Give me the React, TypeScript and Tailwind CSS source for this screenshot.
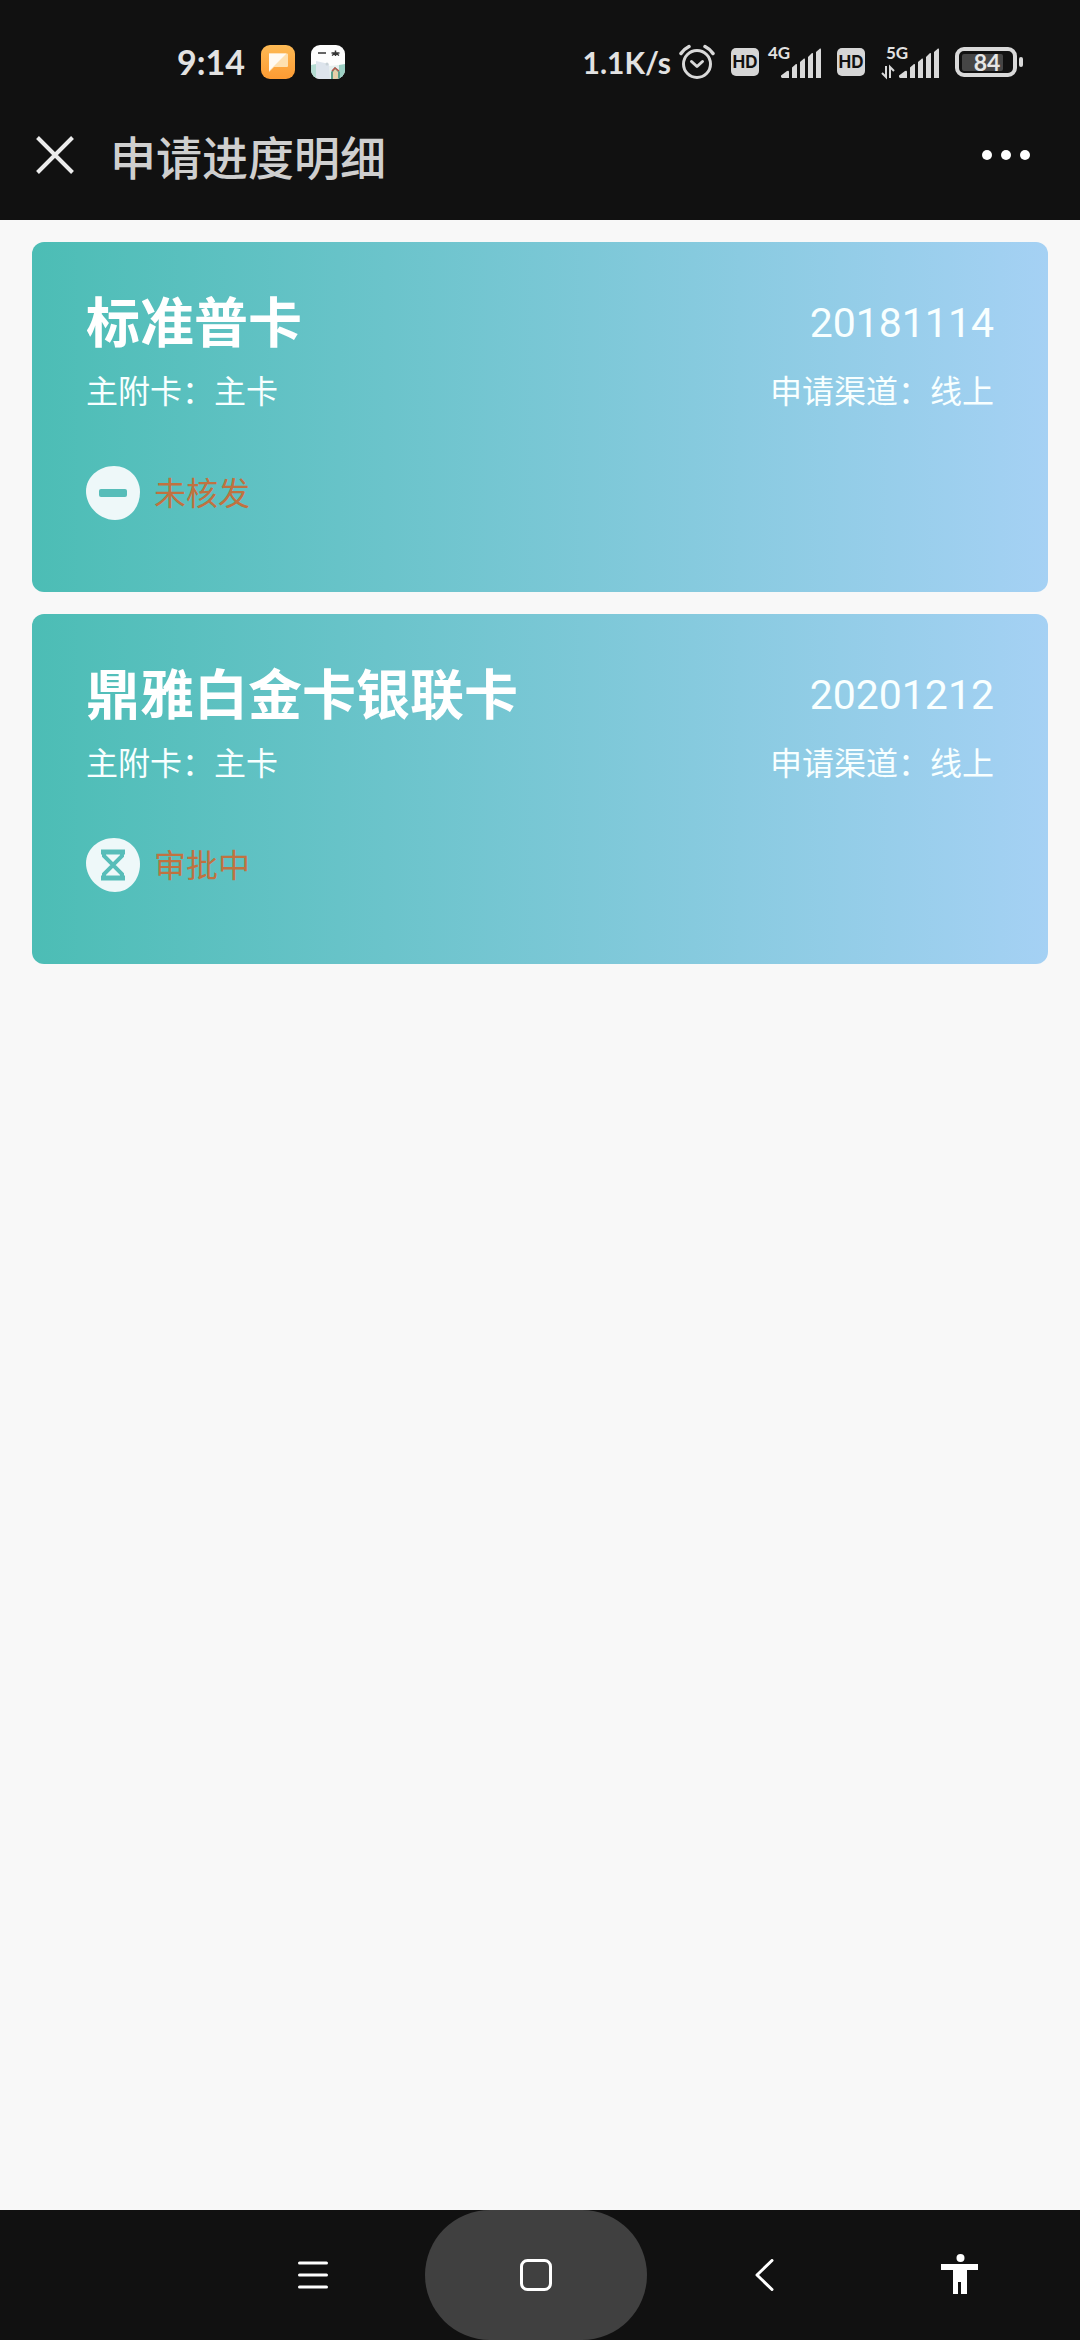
import type { ReactNode } from 'react';

type Status = 'rejected' | 'pending';

interface Application {
    name: string;
    date: string;
    holder: string;
    channel: string;
    status: Status;
    statusText: string;
}

const applications: Application[] = [
    {
        name: '标准普卡',
        date: '20181114',
        holder: '主卡',
        channel: '线上',
        status: 'rejected',
        statusText: '未核发',
    },
    {
        name: '鼎雅白金卡银联卡',
        date: '20201212',
        holder: '主卡',
        channel: '线上',
        status: 'pending',
        statusText: '审批中',
    },
];

function HdBadge() {
    return (
        <span className="flex h-7 w-7 items-center justify-center rounded-[5px] bg-[#d6d6d6] font-['Inter',sans-serif] text-[17px] leading-none font-bold text-[#111111]">
            HD
        </span>
    );
}

function SignalBars() {
    return (
        <g fill="#d9d9d9">
            <path d="M0 29.5 6 25q2-1 2 1v6H1q-1.500-1-1-2.500z" />
            <path d="M11 21.500 15 18q1-.5 1 1v13h-5z" />
            <path d="M19 16 23 12.500q1-.5 1 1V32h-5z" />
            <path d="M27 11 31 7q1-.5 1 1v24h-5z" />
            <path d="M35 6 39 2.500q1-.5 1 1V32h-5z" />
        </g>
    );
}

function Signal4G() {
    return (
        <svg className="h-12 w-[54px]" viewBox="0 -8 54 48">
            <text x="1" y="13" fill="#e2e2e2" fontSize="17" fontWeight="700" fontFamily="Lato, sans-serif">4G</text>
            <g transform="translate(14 0)">
                <SignalBars />
            </g>
        </svg>
    );
}

function Signal5G() {
    return (
        <svg className="h-12 w-[58px]" viewBox="0 -8 58 48">
            <text x="5" y="13" fill="#e2e2e2" fontSize="17" fontWeight="700" fontFamily="Lato, sans-serif">5G</text>
            <path d="M5 20v11L1 27M9 32V21l4 4" fill="none" stroke="#d9d9d9" strokeWidth="2" />
            <g transform="translate(18 0)">
                <SignalBars />
            </g>
        </svg>
    );
}

function AlarmIcon() {
    return (
        <svg className="h-9 w-9" viewBox="0 0 36 36" fill="none" stroke="#d9d9d9" strokeLinecap="round">
            <circle cx="18" cy="20" r="13.500" strokeWidth="3" />
            <path d="M12.500 17.500 18 22.500l5.500-5" strokeWidth="3" strokeLinejoin="round" />
            <path d="M2 9.500Q5 5 10 2.500M34 9.500Q31 5 26 2.500" strokeWidth="3.500" />
        </svg>
    );
}

function BatteryIcon() {
    return (
        <svg className="h-[30px] w-[68px]" viewBox="0 0 68 30">
            <rect x="2" y="2" width="58" height="26" rx="7" fill="none" stroke="#d9d9d9" strokeWidth="4" />
            <rect x="7" y="7" width="41" height="17" rx="2" fill="#454545" />
            <rect x="64" y="10" width="4" height="10" rx="2" fill="#d9d9d9" />
            <text x="32" y="24" textAnchor="middle" fill="#e6e6e6" fontSize="23" fontWeight="700" fontFamily="Lato, sans-serif">84</text>
        </svg>
    );
}

function MessageAppIcon() {
    return (
        <svg className="h-[34px] w-[34px]" viewBox="0 0 34 34">
            <defs>
                <linearGradient id="message-bg" x1="0" y1="0" x2="0" y2="1">
                    <stop offset="0" stopColor="#fdba55" />
                    <stop offset="1" stopColor="#fd9b33" />
                </linearGradient>
            </defs>
            <rect width="34" height="34" rx="9" fill="url(#message-bg)" />
            <path d="M8 8.500h18q1 0 1 1V21q0 1-1 1H13l-5 5z" fill="#fee0b0" />
            <path d="M8 8.500h17.500L8 26z" fill="#fffaf2" />
        </svg>
    );
}

function CalendarAppIcon() {
    return (
        <svg className="h-[34px] w-[34px]" viewBox="0 0 34 34">
            <defs>
                <clipPath id="calendar-clip">
                    <rect width="34" height="34" rx="9" />
                </clipPath>
            </defs>
            <g clipPath="url(#calendar-clip)">
                <rect width="34" height="34" fill="#fdfdfd" />
                <path d="M5 34V16l13 3 2 15z" fill="#dde4ec" />
                <path d="M0 20l5-1v15H0z" fill="#b5dcd2" />
                <path d="M28 20l6-1v15h-6z" fill="#9cd0c3" />
                <path d="M18 21l10-1v14h-9z" fill="#e6efee" />
                <circle cx="16" cy="19" r="1.500" fill="#c8d2d6" />
                <path d="M20 34v-7l4-5 5 5v7z" fill="#5fa08a" />
                <path d="M22 34v-7l2-3 3 3v7z" fill="#e8cfa8" />
                <path d="M21 26l3-3 4 3" fill="none" stroke="#b5574c" strokeWidth="1.500" />
                <path d="M7 8h8M20.500 8h8M24.500 5.500V11M24.500 8l-3.500 2.500M24.500 8l3.500 2.500" fill="none" stroke="#333333" strokeWidth="1.500" />
            </g>
        </svg>
    );
}

function StatusBar() {
    return (
        <div className="flex h-[90px] items-end justify-between pr-[57px] pb-2 pl-[177px] font-['Lato',sans-serif] font-bold text-[#e2e2e2]">
            <div className="flex h-10 items-center gap-4">
                <span className="text-[34px] leading-10">9:14</span>
                <MessageAppIcon />
                <CalendarAppIcon />
            </div>
            <div className="flex h-10 items-center gap-4">
                <div className="flex items-center gap-2">
                    <span className="text-[30px] leading-10">1.1K/s</span>
                    <AlarmIcon />
                </div>
                <div className="flex items-center gap-2">
                    <HdBadge />
                    <Signal4G />
                </div>
                <HdBadge />
                <Signal5G />
                <BatteryIcon />
            </div>
        </div>
    );
}

function TitleBar() {
    return (
        <div className="flex h-[130px] items-start justify-between pr-[50px] pl-9">
            <div className="flex h-[130px] items-center">
                <button type="button" aria-label="关闭">
                    <svg className="h-[38px] w-[38px]" viewBox="0 0 38 38" fill="none" stroke="#ececec" strokeWidth="4">
                        <path d="M1.500 1.500l35 35M36.500 1.500l-35 35" />
                    </svg>
                </button>
                <h1 className="ml-9 pt-2 text-[46px] leading-[60px] font-medium text-[#cfcfcf]">申请进度明细</h1>
            </div>
            <button type="button" aria-label="更多" className="flex h-[130px] items-center gap-[9px]">
                <span className="h-2.5 w-2.5 rounded-full bg-white"></span>
                <span className="h-2.5 w-2.5 rounded-full bg-white"></span>
                <span className="h-2.5 w-2.5 rounded-full bg-white"></span>
            </button>
        </div>
    );
}

function StatusIcon({ status }: { status: Status }) {
    return (
        <svg className="h-[54px] w-[54px]" viewBox="0 0 54 54">
            <path d="M28 0C43 0 54 12 54 26 54 42 43 54 29 54 14 54 0 41 0 25 0 11 13 0 28 0z" fill="#eef8f9" />
            {status === 'rejected' ? (
                <rect x="13" y="23" width="28" height="8" rx="2" fill="#57bdb9" />
            ) : (
                <g fill="none" stroke="#57bdb9">
                    <path d="M15 14h24M15 40h24" strokeWidth="5" />
                    <path d="M18 14v4l9 9 9-9v-4M18 40v-4l9-9 9 9v4" strokeWidth="4" />
                </g>
            )}
        </svg>
    );
}

function ApplicationCard({ item }: { item: Application }) {
    return (
        <article className="rounded-xl bg-linear-to-r/srgb from-[#4cbdb5] to-[#a5d1f4] px-[54px] pt-[45px] pb-[72px] text-[32px] leading-[44px] text-[#f8ffff]">
            <div className="flex items-start justify-between">
                <h2 className="text-[54px] leading-[76px] font-bold text-white">{item.name}</h2>
                <time className="text-[41px] leading-[72px]">{item.date}</time>
            </div>
            <div className="mt-[7px] flex items-center justify-between">
                <p>主附卡：{item.holder}</p>
                <p>申请渠道：{item.channel}</p>
            </div>
            <div className="mt-[52px] flex items-center gap-3.5">
                <StatusIcon status={item.status} />
                <span className="pt-0.5 text-[#c07240]">{item.statusText}</span>
            </div>
        </article>
    );
}

function NavButton({ label, active, children }: { label: string; active?: boolean; children: ReactNode }) {
    return (
        <button
            type="button"
            aria-label={label}
            className={`flex flex-1 items-center justify-center rounded-full ${active ? 'bg-[#404040]' : ''}`}
        >
            {children}
        </button>
    );
}

function NavigationBar() {
    return (
        <nav className="flex h-[130px] bg-[#111111] pr-[30px] pl-[202px]">
            <NavButton label="菜单">
                <svg className="h-8 w-8" viewBox="0 0 32 32" stroke="#ffffff" strokeWidth="3" strokeLinecap="round">
                    <path d="M2.500 4h27M2.500 16h27M2.500 28h27" />
                </svg>
            </NavButton>
            <NavButton label="主页" active>
                <svg className="h-8 w-8" viewBox="0 0 32 32" fill="none" stroke="#ffffff" strokeWidth="3">
                    <rect x="1.500" y="1.500" width="29" height="29" rx="6" />
                </svg>
            </NavButton>
            <NavButton label="返回">
                <svg className="h-8 w-8" viewBox="0 0 32 32" fill="none" stroke="#ffffff" strokeWidth="3" strokeLinecap="round" strokeLinejoin="round">
                    <path d="M29 1.500 14 16l15 14.500" />
                </svg>
            </NavButton>
            <button type="button" aria-label="无障碍" className="flex w-[180px] items-center justify-center">
                <svg className="h-[42px] w-[38px]" viewBox="0 0 38 42" fill="#ffffff">
                    <circle cx="19.500" cy="4" r="4" />
                    <path d="M0 10h37v6H26v24h-6V28h-3v12h-5V16H0z" />
                </svg>
            </button>
        </nav>
    );
}

export default function App() {
    return (
        <div className="flex min-h-screen flex-col bg-[#f8f8f8] font-['Roboto','Noto_Sans_CJK_SC',sans-serif]">
            <header className="bg-[#111111]">
                <StatusBar />
                <TitleBar />
            </header>

            {/* Application list */}
            <main className="flex flex-1 flex-col gap-[22px] px-8 pt-[22px]">
                {applications.map((item) => (
                    <ApplicationCard key={item.date} item={item} />
                ))}
            </main>

            <NavigationBar />
        </div>
    );
}
